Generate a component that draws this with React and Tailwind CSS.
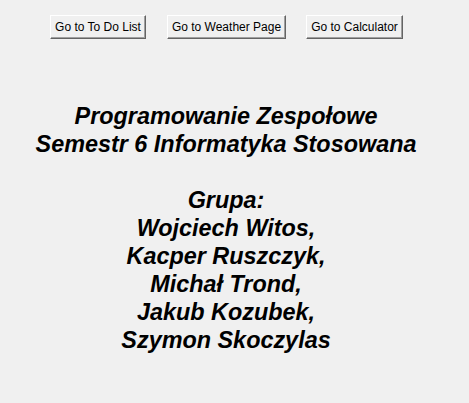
import React from 'react'

const buttons = [
  { label: 'Go to To Do List', width: 'w-[96px]', margin: 'ml-[50px]' },
  { label: 'Go to Weather Page', width: 'w-[119px]', margin: 'ml-[21px]' },
  { label: 'Go to Calculator', width: 'w-[97px]', margin: 'ml-[20px]' },
]

const lines = [
  'Programowanie Zespołowe',
  'Semestr 6 Informatyka Stosowana',
  '\u00a0',
  'Grupa:',
  'Wojciech Witos,',
  'Kacper Ruszczyk,',
  'Michał Trond,',
  'Jakub Kozubek,',
  'Szymon Skoczylas',
]

function TkButton({ label, width, margin }) {
  return (
    <button
      className={`${width} ${margin} h-[24px] bg-[#f0f0f0] border border-t-white border-l-white border-b-[#646464] border-r-[#646464] shadow-[inset_-1px_-1px_0_#a0a0a0] text-[12px] text-black leading-none whitespace-nowrap font-[family-name:'Liberation_Sans',sans-serif]`}
    >
      {label}
    </button>
  )
}

export default function App() {
  return (
    <div className="w-[469px] h-[403px] bg-[#f0f0f0] overflow-hidden">
      <div className="flex pt-[15px]">
        {buttons.map((b) => (
          <TkButton key={b.label} {...b} />
        ))}
      </div>

      <div className="mt-[63px] pr-[17px] text-center font-[family-name:'Liberation_Sans',sans-serif] font-bold italic text-[23.4px] leading-[28px] text-black">
        {lines.map((line, i) => (
          <div key={i}>{line}</div>
        ))}
      </div>
    </div>
  )
}
